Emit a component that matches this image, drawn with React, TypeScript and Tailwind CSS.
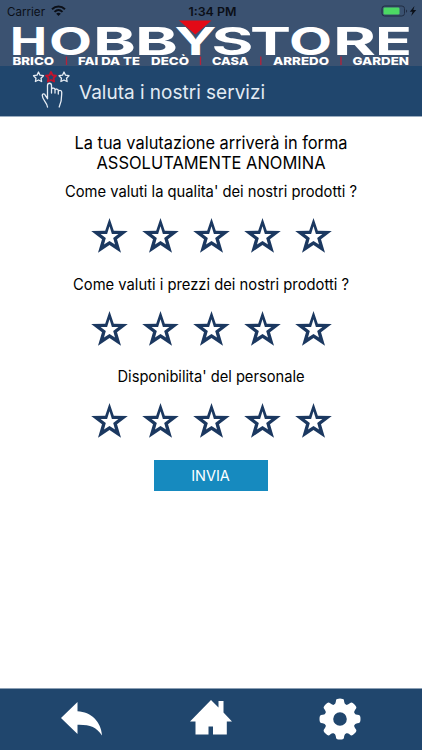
import React from "react";

const logoLetters = [
  { c: "H", x: 10, w: 37 },
  { c: "O", x: 49, w: 43 },
  { c: "B", x: 93, w: 43 },
  { c: "B", x: 135, w: 43 },
  { c: "Y", x: 174.5, w: 42 },
  { c: "S", x: 211.5, w: 42 },
  { c: "T", x: 250, w: 41 },
  { c: "O", x: 289, w: 43 },
  { c: "R", x: 333, w: 43 },
  { c: "E", x: 375, w: 37 },
];

const logoTags = [
  { t: "BRICO", x: 12.5, w: 41.5 },
  { t: "FAI DA TE", x: 78, w: 62 },
  { t: "DECÒ", x: 151, w: 38 },
  { t: "CASA", x: 212, w: 36.5 },
  { t: "ARREDO", x: 273, w: 56 },
  { t: "GARDEN", x: 352.5, w: 56.5 },
];

const questions = [
  { text: "Come valuti la qualita' dei nostri prodotti ?", w: 292 },
  { text: "Come valuti i prezzi dei nostri prodotti ?", w: 276 },
  { text: "Disponibilita' del personale", w: 187 },
];

function Logo() {
  return (
    <svg width="422" height="48" viewBox="0 18 422 48" className="block overflow-visible" fontFamily="Inter, sans-serif">
      {logoLetters.map((l, i) => (
        <text
          key={i}
          x={l.x}
          y="55"
          fontSize="38"
          fontWeight="700"
          fill="#fff"
          textLength={l.w}
          lengthAdjust="spacingAndGlyphs"
        >
          {l.c}
        </text>
      ))}
      <path d="M178 20h35l-17.500 16z" fill="#3b5271" />
      <path d="M179 20.500h32.500l-16.200 14z" fill="#e30a17" />
      {logoTags.map((l) => (
        <text key={l.t} x={l.x} y="65" fontSize="11" fontWeight="800" fill="#fff" textLength={l.w} lengthAdjust="spacingAndGlyphs">
          {l.t}
        </text>
      ))}
      {[66.500, 200.500, 260.800, 341].map((x) => (
        <path key={x} d={`M${x} 56.500v8.500`} stroke="#b5213a" strokeWidth="1.300" />
      ))}
    </svg>
  );
}

function Star() {
  return (
    <svg width="37" height="36" viewBox="0 0 37 36">
      <path
        fillRule="evenodd"
        fill="#1b3860"
        d="M18.500 0 22.800 12.700l14 .3L26 21.300l4 13.400-11.500-7.800L7 34.700 11 21.300.2 13 14.200 12.700zM18.500 8.300l-2.400 7.600-6.500.2 5.200 4-1.800 6.500 5.500-3.700 5.500 3.700-1.800-6.500 5.200-4-6.500-.2z"
      />
    </svg>
  );
}

const smallStar = "M0-5 1.500-1.800 5-1.300 2.500 1.200 3.100 4.500 0 3-3.100 4.500-2.500 1.200-5-1.300-1.500-1.800z";

function RateIcon() {
  return (
    <svg width="38" height="40" viewBox="32 70 38 40" fill="none" stroke="#e7edf4" strokeWidth="1.300" strokeLinejoin="round" strokeLinecap="round">
      <path transform="translate(38.500 78)" d={smallStar} />
      <path transform="translate(51 78)" d={smallStar} stroke="#c3142d" strokeWidth="1.900" />
      <path transform="translate(64 78)" d={smallStar} />
      <path d="M47.500 108c-.5-4.500-5.200-7-5.200-11.500 0-2.200 2.500-2 3.200.2l2 3V86.500c0-3 4-3 4 0V94v-3.500c0-2 3.500-2 3.500.2V94v-2.500c0-2 3.300-2 3.300.2V95v-2.200c0-2 3.400-2 3.400.3 0 7 .3 8.900-2.500 14.900" />
    </svg>
  );
}

export default function App() {
  return (
    <div className="flex h-[750px] w-[422px] flex-col overflow-hidden bg-white font-['Inter',sans-serif] text-black">
      <header className="h-[66px] shrink-0 bg-[#3b5271]">
        <div className="flex h-[18px] items-end justify-between pr-[4px] pl-[7px] text-[#0b0f17]">
          <div className="flex w-[126px] items-end gap-[5px]">
            <svg width="39" height="14" className="block overflow-visible">
              <text x="0" y="11.500" fontSize="11.500" fill="currentColor" textLength="38" lengthAdjust="spacingAndGlyphs">Carrier</text>
            </svg>
            <svg width="15" height="12" viewBox="0 0 15 12" fill="none" stroke="currentColor" strokeWidth="2" className="mb-[1px]">
              <path d="M1 4.200C4.800.6 10.200.6 14 4.200M3.500 6.900c2.400-2.300 5.600-2.300 8 0" />
              <path d="M7.500 11 5.200 8.700c1.300-1.200 3.300-1.200 4.600 0z" fill="currentColor" stroke="none" />
            </svg>
          </div>
          <svg width="48" height="14" className="block overflow-visible">
            <text x="-1.500" y="11.500" fontSize="11.500" fontWeight="600" fill="currentColor" textLength="48" lengthAdjust="spacingAndGlyphs">1:34 PM</text>
          </svg>
          <div className="flex w-[124px] items-end justify-end">
            <svg width="37" height="14" viewBox="381 3.500 37 14">
              <rect x="382" y="5.500" width="22.500" height="10" rx="2.600" fill="none" stroke="#202d43" />
              <rect x="383.500" y="7" width="16" height="7" rx="1.200" fill="#4cd964" />
              <path d="M406 9v3.200c1.500-.7 1.500-2.500 0-3.200z" fill="#202d43" />
              <path d="m414.500 5.500-4.700 5.700h2.700l-1.300 4.300 5-6h-2.900z" fill="currentColor" />
            </svg>
          </div>
        </div>
        <Logo />
      </header>

      <div className="flex h-[51px] shrink-0 items-start border-b border-[#9badc0] bg-[#20466d] pt-[3px] pl-[32px]">
        <RateIcon />
        <svg width="200" height="40" className="block">
          <text x="9" y="30" fontSize="19" fill="#e3ebf3" textLength="186" lengthAdjust="spacingAndGlyphs">Valuta i nostri servizi</text>
        </svg>
      </div>

      <main className="flex flex-1 flex-col items-center pt-[16px]">
        <svg width="300" height="42" className="block shrink-0 overflow-visible" fontSize="17.300" textAnchor="middle">
          <text x="150" y="16" textLength="273" lengthAdjust="spacingAndGlyphs">La tua valutazione arriverà in forma</text>
          <text x="150" y="36" textLength="229" lengthAdjust="spacingAndGlyphs">ASSOLUTAMENTE ANOMINA</text>
        </svg>
        {questions.map((q) => (
          <section key={q.text} className="flex h-[92.500px] shrink-0 flex-col items-center pt-[6px]">
            <svg width="300" height="24" className="block overflow-visible" fontSize="15.300" textAnchor="middle">
              <text x="150" y="16" textLength={q.w} lengthAdjust="spacingAndGlyphs">{q.text}</text>
            </svg>
            <div className="mt-[13px] flex gap-[14px]">
              {[0, 1, 2, 3, 4].map((i) => (
                <Star key={i} />
              ))}
            </div>
          </section>
        ))}
        <button className="mt-[7px] h-[31px] w-[114px] bg-[#168abf] pr-[1px] text-[14.500px] leading-[31px] text-white">INVIA</button>
      </main>

      <footer className="h-[62px] shrink-0 border-t border-[#8c9fb4] bg-[#20466d]">
        <div className="flex items-start justify-between pt-[8px] pr-[60px] pl-[60px]">
          <svg width="44" height="44" viewBox="60 697 44 44" fill="#fff">
            <path d="M61 718 77.500 702v9.300c13.500.6 23.500 10 24.500 24.200-5.500-8.500-12.500-11-24.500-10.700v9.200z" />
          </svg>
          <svg width="44" height="44" viewBox="189 697 44 44" fill="#fff">
            <path d="M190 721.500 211 700l7.500 7.500V701h5v11.500l8.500 9h-5.200v13H213v-8h-4.500v8h-13v-13z" />
          </svg>
          <svg width="44" height="44" viewBox="-22 -22 44 44" fill="#fff">
            <circle r="11.200" fill="none" stroke="#fff" strokeWidth="8.800" />
            {[0, 45, 90, 135, 180, 225, 270, 315].map((a) => (
              <path key={a} transform={`rotate(${a})`} d="M-6.500-13.500C-4.500-15-4.300-16.500-3.900-19Q-3.500-20.500 0-20.500T3.900-19C4.300-16.500 4.500-15 6.500-13.500z" />
            ))}
          </svg>
        </div>
      </footer>
    </div>
  );
}
